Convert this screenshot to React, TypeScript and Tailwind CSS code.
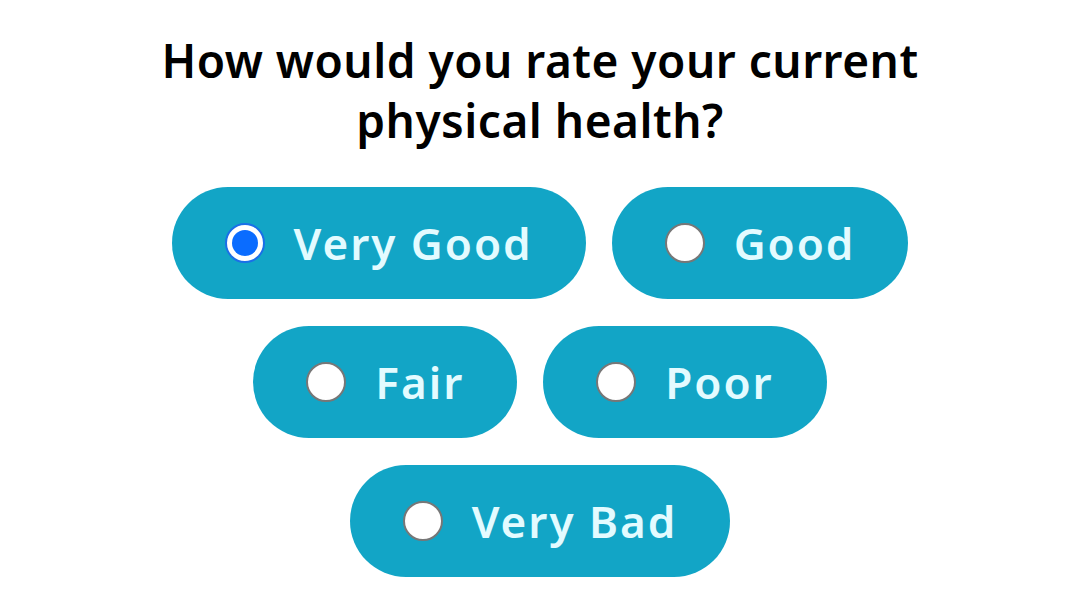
import { useState } from 'react';

const rows: string[][] = [['Very Good', 'Good'], ['Fair', 'Poor'], ['Very Bad']];

function Radio({ checked }: { checked: boolean }) {
  if (checked) {
    return (
      <span className="flex items-center justify-center w-[40px] h-[40px] rounded-full bg-white border-2 border-[#1a6fe8] shrink-0">
        <span className="w-[26px] h-[26px] rounded-full bg-[#0a6cff]" />
      </span>
    );
  }
  return <span className="w-[40px] h-[40px] rounded-full bg-white border-2 border-[#777777] shrink-0" />;
}

export default function App() {
  const [value, setValue] = useState('Very Good');

  return (
    <div
      className="w-[1080px] h-[612px] bg-white flex flex-col items-center pt-[30px]"
      style={{ fontFamily: '"Noto Sans", sans-serif' }}
    >
      <h1 className="text-[46px] leading-[60px] font-semibold tracking-[0.5px] text-black text-center max-w-[820px]">
        How would you rate your current physical health?
      </h1>
      <div className="flex flex-col items-center gap-[27px] mt-[37px]">
        {rows.map((row, i) => (
          <div key={i} className="flex gap-[26px]">
            {row.map(opt => (
              <button
                key={opt}
                onClick={() => setValue(opt)}
                className="h-[112px] rounded-full bg-[#12a5c6] flex items-center gap-[29px] px-[53px]"
              >
                <Radio checked={value === opt} />
                <span className="text-[44px] font-semibold tracking-[2px] text-[#e3fbff] leading-none">{opt}</span>
              </button>
            ))}
          </div>
        ))}
      </div>
    </div>
  );
}
